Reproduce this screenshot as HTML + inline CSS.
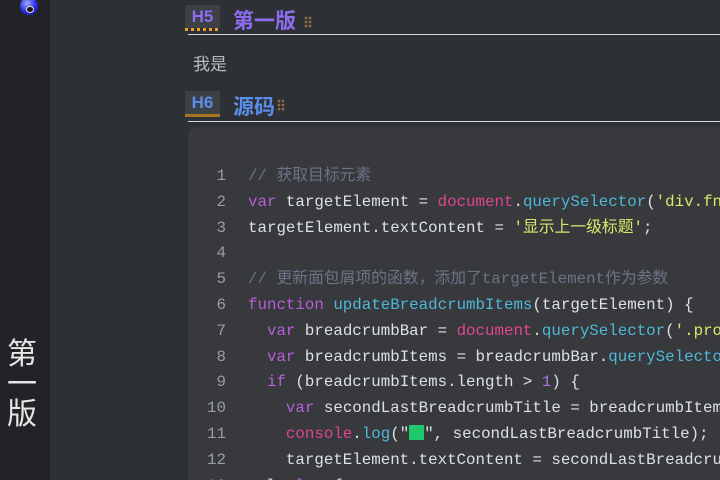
<!DOCTYPE html>
<html><head><meta charset="utf-8"><style>
*{margin:0;padding:0;box-sizing:border-box}
html,body{width:720px;height:480px;overflow:hidden}
body{background:#2d3034;position:relative;font-family:"Liberation Sans","Noto Sans CJK SC",sans-serif}
.side{position:absolute;left:0;top:0;width:50px;height:480px;background:#212326}
.vt{position:absolute;left:6px;top:340px;color:#e6e6e6;font-size:30px;line-height:30px;width:32px;text-align:center}
.ball{position:absolute;left:20px;top:-3px;width:18px;height:18px;border-radius:50%;background:radial-gradient(circle at 40% 35%,#9aa8ff,#2a2ae0 55%,#1010a0)}
.ball:after{content:"";position:absolute;left:6px;top:9px;width:6px;height:5px;border-radius:50%;background:#111;border:1px solid #ddd}
.badge{position:absolute;left:185px;width:35px;height:23px;background:#3d4045;font:bold 17px "Liberation Sans",sans-serif;text-align:center;line-height:23px}
.h{position:absolute;font-weight:bold;font-size:21px}
.grip{position:absolute;width:8px;height:12px;background:radial-gradient(circle,#8a6a4a 1.2px,transparent 1.6px) 0 0/4px 4px}
.line{position:absolute;left:188px;right:0;height:1px;background:#d8d8d8}
.code{position:absolute;left:188px;top:127px;width:540px;height:353px;background:#37393d;border-radius:8px 0 0 0}
pre{position:absolute;left:0;top:164px;font:15.8px/25.8px "Liberation Mono","Noto Sans CJK SC",monospace;color:#dde0e4}
.n{display:inline-block;width:248px;text-align:right;color:#9a9da3;padding-right:22px}
.c{color:#6c7385}.k{color:#b65fd8}.d{color:#e0458f}.m{color:#4fb8d8}.s{color:#d8e86a}.p{color:#a876e8}
.sq{display:inline-block;width:15px;height:15px;background:#1fc86a;vertical-align:-2px}
</style></head><body>
<div class="side"></div><div class="ball"></div>
<div class="vt">第<br>一<br>版</div>
<div class="badge" style="top:5px;color:#8d6cf0">H5</div>
<div style="position:absolute;left:185px;top:28px;width:35px;height:3px;background:repeating-linear-gradient(90deg,#f0a020 0 3px,transparent 3px 6px)"></div>
<div class="h" style="left:233px;top:5px;color:#8d6cf0">第一版</div>
<div class="grip" style="left:304px;top:16px"></div>
<div class="line" style="top:34px"></div>
<div style="position:absolute;left:193px;top:50px;color:#b8bcc2;font-size:17px">我是</div>
<div class="badge" style="top:91px;color:#5a8ee8">H6</div>
<div style="position:absolute;left:185px;top:114px;width:35px;height:3px;background:#a8741e"></div>
<div class="h" style="left:233px;top:91px;color:#5a8ee8">源码</div>
<div class="grip" style="left:277px;top:99px"></div>
<div class="line" style="top:121px"></div>
<div class="code"></div>
<pre><span class="n">1</span><span class="c">// 获取目标元素</span>
<span class="n">2</span><span class="k">var</span> targetElement = <span class="d">document</span>.<span class="m">querySelector</span>(<span class="s">'div.fn</span>
<span class="n">3</span>targetElement.textContent = <span class="s">'显示上一级标题'</span>;
<span class="n">4</span>
<span class="n">5</span><span class="c">// 更新面包屑项的函数，添加了targetElement作为参数</span>
<span class="n">6</span><span class="k">function</span> <span class="m">updateBreadcrumbItems</span>(targetElement) {
<span class="n">7</span>  <span class="k">var</span> breadcrumbBar = <span class="d">document</span>.<span class="m">querySelector</span>(<span class="s">'.pro</span>
<span class="n">8</span>  <span class="k">var</span> breadcrumbItems = breadcrumbBar.<span class="m">querySelector</span>
<span class="n">9</span>  <span class="k">if</span> (breadcrumbItems.length &gt; <span class="p">1</span>) {
<span class="n">10</span>    <span class="k">var</span> secondLastBreadcrumbTitle = breadcrumbItem
<span class="n">11</span>    <span class="d">console</span>.<span class="m">log</span>("<span class="sq"></span>", secondLastBreadcrumbTitle);
<span class="n">12</span>    targetElement.textContent = secondLastBreadcru
<span class="n">13</span>  } <span class="k">else</span> {</pre>
</body></html>
